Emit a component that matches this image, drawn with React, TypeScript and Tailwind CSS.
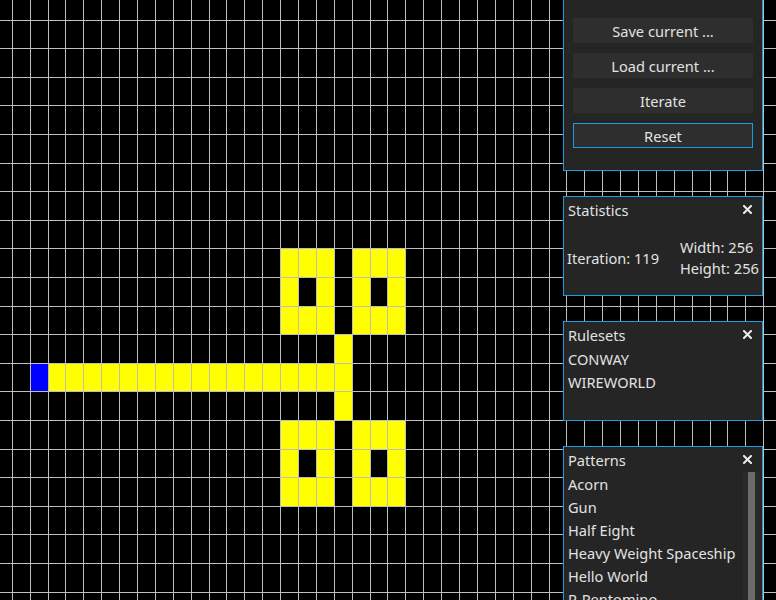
import React from "react";

const COLS = 44;
const ROWS = 22;
const vx = (k: number) => Math.floor(12.3 + 17.89 * k);
const hy = (r: number) => Math.floor(20 + 28.6 * r);

function cellsList(): { c: number; r: number; color: string }[] {
  const out: { c: number; r: number; color: string }[] = [];
  out.push({ c: 1, r: 12, color: "#0000ff" });
  for (let c = 2; c <= 18; c++) out.push({ c, r: 12, color: "#ffff00" });
  out.push({ c: 18, r: 11, color: "#ffff00" });
  out.push({ c: 18, r: 13, color: "#ffff00" });
  const block = (c0: number, r0: number) => {
    for (let dc = 0; dc < 3; dc++)
      for (let dr = 0; dr < 3; dr++) {
        if (dc === 1 && dr === 1) continue;
        out.push({ c: c0 + dc, r: r0 + dr, color: "#ffff00" });
      }
  };
  block(15, 8);
  block(19, 8);
  block(15, 14);
  block(19, 14);
  return out;
}

function Grid() {
  const cells = cellsList();
  const v: number[] = [];
  for (let k = 0; k < COLS; k++) v.push(vx(k));
  const h: number[] = [];
  for (let r = 0; r < ROWS; r++) h.push(hy(r));
  return (
    <svg width={776} height={600} className="block" xmlns="http://www.w3.org/2000/svg">
      <rect x={0} y={0} width={776} height={600} fill="#000" />
      {cells.map((cl, i) => {
        const x0 = vx(cl.c) + 1;
        const x1 = vx(cl.c + 1);
        const y0 = hy(cl.r) + 1;
        const y1 = hy(cl.r + 1);
        return <rect key={i} x={x0} y={y0} width={x1 - x0} height={y1 - y0} fill={cl.color} />;
      })}
      {v.map((x, i) => (
        <rect key={"v" + i} x={x} y={0} width={1} height={600} fill="#bebebe" />
      ))}
      {h.map((y, i) => (
        <rect key={"h" + i} x={0} y={y} width={776} height={1} fill="#bebebe" />
      ))}
    </svg>
  );
}

function CloseX() {
  return (
    <svg width="9" height="9" viewBox="0 0 9 9" className="block">
      <path d="M1 1 L8 8 M8 1 L1 8" stroke="#ececec" strokeWidth="2" strokeLinecap="square" />
    </svg>
  );
}

function TitleRow({ title }: { title: string }) {
  return (
    <div className="flex items-center justify-between h-[20px] mt-[3px] pl-[4px] pr-[10px]">
      <span className="leading-[20px]">{title}</span>
      <span className="-mt-[2px]">
        <CloseX />
      </span>
    </div>
  );
}

function Btn({ label, active }: { label: string; active?: boolean }) {
  return (
    <div
      className={
        "h-[25px] w-full bg-[#2e2e2e] flex items-center justify-center leading-[20px] " +
        (active ? "border border-[#1c9ce0]" : "")
      }
    >
      {label}
    </div>
  );
}

export default function App() {
  const patterns = ["Acorn", "Gun", "Half Eight", "Heavy Weight Spaceship", "Hello World", "R-Pentomino", "Glider"];
  return (
    <div
      className="relative w-[776px] h-[600px] overflow-hidden bg-black text-[14.6px] text-[#e2e2e2]"
      style={{ fontFamily: '"Noto Sans", "Open Sans", sans-serif' }}
    >
      <Grid />
      <div className="absolute left-[563px] top-0 w-[200px] flex flex-col gap-[25px]">
        <div className="h-[171px] border border-t-0 border-[#1c9ce0] bg-[#252525] px-[9px] pt-[18px] flex flex-col gap-[10px]">
          <Btn label="Save current ..." />
          <Btn label="Load current ..." />
          <Btn label="Iterate" />
          <Btn label="Reset" active />
        </div>

        <div className="h-[100px] border border-[#1c9ce0] bg-[#252525] flex flex-col">
          <TitleRow title="Statistics" />
          <div className="flex-1 flex items-center">
            <div className="pl-[3px] w-[116px] leading-[20px] whitespace-nowrap">Iteration: 119</div>
            <div className="flex flex-col leading-[21px] whitespace-nowrap">
              <span>Width: 256</span>
              <span>Height: 256</span>
            </div>
          </div>
        </div>

        <div className="h-[100px] border border-[#1c9ce0] bg-[#252525] flex flex-col">
          <TitleRow title="Rulesets" />
          <div className="pl-[4px] pt-[3px] flex flex-col leading-[23px]">
            <span>CONWAY</span>
            <span>WIREWORLD</span>
          </div>
        </div>

        <div className="h-[200px] border border-[#1c9ce0] bg-[#252525] flex flex-col relative">
          <TitleRow title="Patterns" />
          <div className="flex flex-1 overflow-hidden">
            <div className="flex-1 pl-[4px] pt-[3px] flex flex-col leading-[23px] whitespace-nowrap overflow-hidden">
              {patterns.map((p) => (
                <span key={p}>{p}</span>
              ))}
            </div>
            <div className="w-[17px] mr-[2px] mt-[2px] bg-[#2a2a2a] flex justify-start pl-[5px]">
              <div className="w-[7px] h-full bg-[#6c6c6c]" />
            </div>
          </div>
        </div>
      </div>
    </div>
  );
}
